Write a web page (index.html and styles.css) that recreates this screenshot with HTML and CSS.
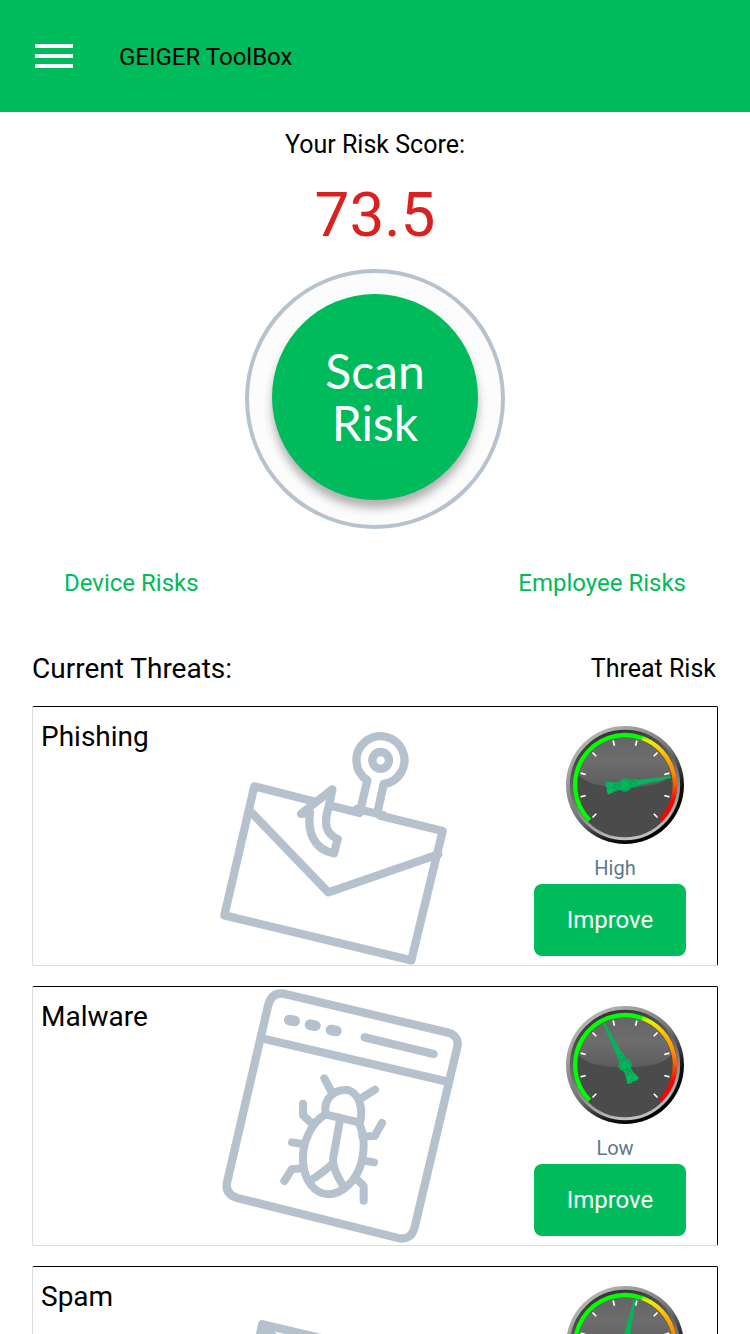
FILE: index.html
```html
<!DOCTYPE html>
<html lang="en">
<head>
<meta charset="utf-8">
<meta name="viewport" content="width=device-width, initial-scale=1">
<title>GEIGER ToolBox</title>
<link rel="stylesheet" href="styles.css">
</head>
<body>
<svg class="defs" aria-hidden="true">
  <defs>
    <linearGradient id="rim" x1="0.2" y1="0.1" x2="0.8" y2="0.9">
      <stop offset="0" stop-color="#b4b4b0"/><stop offset="0.5" stop-color="#707070"/><stop offset="0.8" stop-color="#111"/><stop offset="1" stop-color="#000"/>
    </linearGradient>
    <linearGradient id="bezel" x1="0.35" y1="0" x2="0.65" y2="1">
      <stop offset="0" stop-color="#333"/><stop offset="0.45" stop-color="#6c6c6c"/><stop offset="1" stop-color="#c4c4c4"/>
    </linearGradient>
    <linearGradient id="gloss" x1="0" y1="0" x2="0" y2="1">
      <stop offset="0" stop-color="#656565"/><stop offset="0.5" stop-color="#6d6d6d"/><stop offset="1" stop-color="#5c5c5c"/>
    </linearGradient>
    <linearGradient id="heat" gradientUnits="userSpaceOnUse" x1="0" y1="66" x2="0" y2="260">
      <stop offset="0" stop-color="#5f0"/><stop offset="0.06" stop-color="#e6f000"/><stop offset="0.2" stop-color="#fc0"/><stop offset="0.6" stop-color="#ff8000"/><stop offset="1" stop-color="#f00"/>
    </linearGradient>
    <g id="face">
      <circle cx="210" cy="210" r="177" fill="url(#rim)"/>
      <circle cx="210" cy="210" r="161" fill="#4b4b4b" stroke="url(#bezel)" stroke-width="9"/>
      <path d="M71 180A142 142 0 0 1 349 180Q320 217 210 217T71 180Z" fill="url(#gloss)"/>
      <path d="M104 316A150 150 0 0 1 261 69" fill="none" stroke="#0f0" stroke-width="13"/>
      <path d="M261 69A150 150 0 0 1 316 316" fill="none" stroke="url(#heat)" stroke-width="13"/>
      <g stroke="#fff" stroke-width="5">
        <path d="M210 72V88" transform="rotate(-135 210 210)"/>
        <path d="M210 72V88" transform="rotate(-105 210 210)"/>
        <path d="M210 72V88" transform="rotate(-75 210 210)"/>
        <path d="M210 72V88" transform="rotate(-45 210 210)"/>
        <path d="M210 72V88" transform="rotate(-15 210 210)"/>
        <path d="M210 72V88" transform="rotate(15 210 210)"/>
        <path d="M210 72V88" transform="rotate(45 210 210)"/>
        <path d="M210 72V88" transform="rotate(75 210 210)"/>
        <path d="M210 72V88" transform="rotate(105 210 210)"/>
        <path d="M210 72V88" transform="rotate(135 210 210)"/>
      </g>
    </g>
    <g id="needle" fill="#03b55b">
      <path d="M207 70H213L218 166L222 184L218 196H202L198 184L202 166Z"/>
      <path d="M199 222H221L223 240L230 264L219 268L210 265L201 268L190 264L197 240Z"/>
      <circle cx="210" cy="210" r="20"/>
      <g fill="none" stroke="#04904f" stroke-width="2">
        <circle cx="210" cy="210" r="15"/>
        <circle cx="210" cy="184" r="7"/>
        <circle cx="210" cy="236" r="7"/>
      </g>
    </g>
  </defs>
</svg>

<div class="app">
  <header class="bar">
    <button class="menu" type="button" aria-label="Open menu"><span></span><span></span><span></span></button>
    <h1 class="bar-title">GEIGER ToolBox</h1>
  </header>

  <main class="content">
    <section class="summary">
      <p class="score-label">Your Risk Score:</p>
      <p class="score">73.5</p>
      <div class="ring">
        <button class="scan" type="button">Scan<br>Risk</button>
      </div>
    </section>

    <nav class="links">
      <a href="#device">Device Risks</a>
      <a href="#employee">Employee Risks</a>
    </nav>

    <div class="list-head">
      <h2 class="list-title">Current Threats:</h2>
      <p class="list-note">Threat Risk</p>
    </div>

    <div class="threats">
      <article class="card">
        <h3 class="card-title">Phishing</h3>
        <svg class="art" viewBox="0 -54 780 774" aria-hidden="true">
          <path d="M449 264L133 184L43 571L604 706L698 318L510 272"/>
          <path d="M122 260L355 502L685 388"/>
          <path d="M454 242L472 166A72 72 0 1 1 521 177L502 264M440 252L520 270"/>
          <circle cx="512" cy="106" r="25"/>
          <path class="filled" d="M273 267L367 193L355 250C342 292 345 326 383 342L372 385C313 374 291 322 300 263Z"/>
        </svg>
        <div class="risk">
          <svg class="gauge" viewBox="33 33 354 354" role="img" aria-label="High risk gauge"><use href="#face"/><use href="#needle" transform="rotate(80 210 210)"/></svg>
          <span class="level">High</span>
          <button class="improve" type="button">Improve</button>
        </div>
      </article>

      <article class="card">
        <h3 class="card-title">Malware</h3>
        <svg class="art" viewBox="0 21 780 774" aria-hidden="true">
          <path d="M220 41L711 157Q751 168 741 205L615 737Q605 783 564 774L82 654Q42 641 52 603L174 78Q184 36 220 41ZM164 177L712 305"/>
          <path class="thick" d="M238 120L254 123M300 134L316 137M363 150L379 153"/>
          <path d="M464 172L671 222"/>
          <g class="bug">
            <path d="M346 398C341 353 375 327 414 330C446 340 461 380 450 428L346 403Z"/>
            <path d="M346 404C305 425 275 490 279 545C283 604 315 641 354 643C395 643 437 605 453 552C468 500 460 455 446 428"/>
            <path d="M391 415L370 530Q365 555 388 598L400 618M368 550Q350 570 299 603"/>
            <path d="M343 295L365 336M455 354L495 329M308 432L279 406V371M457 469L494 468L516 429M277 492L246 487M457 541L492 547M276 565L245 568L223 603M437 594L461 618V662"/>
          </g>
        </svg>
        <div class="risk">
          <svg class="gauge" viewBox="33 33 354 354" role="img" aria-label="Low risk gauge"><use href="#face"/><use href="#needle" transform="rotate(-27 210 210)"/></svg>
          <span class="level">Low</span>
          <button class="improve" type="button">Improve</button>
        </div>
      </article>

      <article class="card">
        <h3 class="card-title">Spam</h3>
        <svg class="art" viewBox="-90 -99 780 774" aria-hidden="true">
          <path d="M67 73L548 186L458 572L-23 459Z"/>
          <path d="M67 73L230 332L548 186M67 73L60 110L100 108Z"/>
        </svg>
        <div class="risk">
          <svg class="gauge" viewBox="33 33 354 354" role="img" aria-label="Risk gauge"><use href="#face"/><use href="#needle" transform="rotate(12 210 210)"/></svg>
        </div>
      </article>
    </div>
  </main>
</div>
</body>
</html>
```
FILE: styles.css
```css
* { box-sizing: border-box; }

body {
  margin: 0;
  background: #fff;
  color: #000;
  font-family: Roboto, "Liberation Sans", sans-serif;
  font-size: 24px;
  line-height: 32px;
}

h1, h2, h3, p { margin: 0; font-weight: 400; }

button { border: 0; padding: 0; font-family: inherit; cursor: pointer; }

.defs { position: absolute; width: 0; height: 0; }

.app { display: flex; flex-direction: column; height: 100vh; }

.bar {
  display: flex;
  align-items: center;
  gap: 46px;
  flex: none;
  height: 112px;
  padding: 0 35px;
  background: #00bb5c;
}

.menu {
  display: flex;
  flex-direction: column;
  gap: 6px;
  width: 38px;
  background: none;
}

.menu span { height: 4px; background: #fff; }

.bar-title { padding-top: 2px; font-size: 24px; }

.content {
  flex: 1;
  min-height: 0;
  padding: 17px 32px 20px;
  overflow-y: auto;
  scrollbar-width: none;
}

.summary { display: flex; flex-direction: column; align-items: center; }

.score-label { font-size: 25px; }

.score {
  margin: 18px 0;
  color: #db2020;
  font-size: 62px;
  line-height: 72px;
}

.ring {
  display: flex;
  justify-content: center;
  width: 260px;
  height: 260px;
  padding-top: 21px;
  border: 4px solid #b6c3ce;
  border-radius: 50%;
  background: #fcfcfc;
}

.scan {
  width: 206px;
  height: 206px;
  border-radius: 50%;
  background: #00bb5c;
  box-shadow: 0 8px 10px rgba(0, 0, 0, 0.3);
  color: #fff;
  font-family: Lato, sans-serif;
  font-size: 48px;
  line-height: 52px;
}

.links {
  display: flex;
  justify-content: space-between;
  padding: 38px 32px 0;
}

.links a { color: #00bb5c; text-decoration: none; }

.list-head {
  display: flex;
  justify-content: space-between;
  align-items: center;
  padding: 54px 2px 21px 0;
}

.list-title, .card-title { font-size: 28px; }

.list-note { font-size: 25px; }

.threats { display: flex; flex-direction: column; gap: 20px; }

.card {
  display: flex;
  height: 260px;
  border: 1px solid;
  border-color: #000 #000 #dcdcdc #dcdcdc;
  border-radius: 2px;
}

.card-title { flex: 1; padding: 14px 0 0 8px; }

.art {
  flex: none;
  width: 260px;
  height: 258px;
  fill: none;
  stroke: #b5c2cd;
  stroke-width: 25px;
  stroke-linecap: round;
  stroke-linejoin: round;
}

.art .thick { stroke-width: 32px; }
.art .filled { fill: #fff; }
.art .bug { stroke-width: 24px; }

.risk {
  display: flex;
  flex-direction: column;
  width: 152px;
  margin: 19px 31px 0 64px;
}

.gauge {
  align-self: flex-end;
  width: 118px;
  height: 118px;
  margin-right: 2px;
}

.level {
  padding: 12px 0 4px 10px;
  color: #5d788c;
  font-size: 20px;
  line-height: 24px;
  text-align: center;
}

.improve {
  height: 72px;
  border-radius: 8px;
  background: #00bb5c;
  color: #fff;
  font-size: 24px;
}
```
